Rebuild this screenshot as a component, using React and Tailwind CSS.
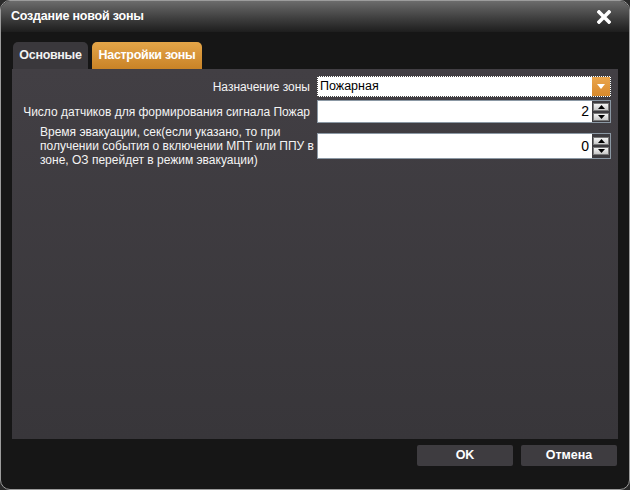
import React, { useState } from 'react';

function Spinner() {
    return (
        <div className="flex flex-col justify-center gap-[2px] w-[17px] pr-[1px]">
            <button className="h-[8px] bg-gradient-to-b from-[#f4f4f4] to-[#c8c8c8] border border-[#7a7a7a] flex items-center justify-center">
                <svg width="7" height="4" viewBox="0 0 7 4"><path d="M0 4 L3.5 0 L7 4 Z" fill="#000" /></svg>
            </button>
            <button className="h-[8px] bg-gradient-to-b from-[#f4f4f4] to-[#c8c8c8] border border-[#7a7a7a] flex items-center justify-center">
                <svg width="7" height="4" viewBox="0 0 7 4"><path d="M0 0 L3.5 4 L7 0 Z" fill="#000" /></svg>
            </button>
        </div>
    );
}

function NumberField({ value, height }) {
    return (
        <div className={`flex items-stretch bg-[#3d3b3f] border border-[#8b98a4] ${height}`}>
            <div className="flex-1 bg-white flex items-center justify-end pr-[3px] text-[14px] text-black">{value}</div>
            <div className="w-[1px]" />
            <Spinner />
        </div>
    );
}

export default function App() {
    const [tab, setTab] = useState(1);

    return (
        <div className="w-[630px] h-[490px] bg-[#2a2a2a] font-['Liberation_Sans',Arial,sans-serif]">
            <div className="w-full h-full rounded-[10px] border border-[#9c9c9c] bg-[#161616] overflow-hidden flex flex-col">
                {/* Title bar */}
                <div className="h-[31px] shrink-0 bg-gradient-to-b from-[#6c6c6c] to-[#1e1e1e] flex items-center justify-between pl-[10px] pr-[18px]">
                    <span className="text-white font-bold text-[12.5px] tracking-[-0.2px]">Создание новой зоны</span>
                    <svg width="14" height="14" viewBox="0 0 14 14">
                        <path d="M2 2 L12 12 M12 2 L2 12" stroke="#fff" strokeWidth="3.6" strokeLinecap="square" />
                    </svg>
                </div>

                {/* Tabs */}
                <div className="flex gap-[4px] pl-[12px] pt-[10px] h-[37px] shrink-0 items-end">
                    <button
                        onClick={() => setTab(0)}
                        className={`h-[27px] w-[75px] whitespace-nowrap rounded-t-[5px] text-[12.5px] font-bold tracking-[-0.3px] ${tab === 0 ? 'bg-gradient-to-b from-[#e4a548] to-[#c98326] text-white' : 'bg-[#3a383c] text-[#f2f2f2]'}`}
                    >
                        Основные
                    </button>
                    <button
                        onClick={() => setTab(1)}
                        className={`h-[27px] w-[110px] whitespace-nowrap rounded-t-[5px] text-[12.5px] font-bold tracking-[-0.3px] ${tab === 1 ? 'bg-gradient-to-b from-[#e4a548] to-[#c98326] text-white' : 'bg-[#3a383c] text-[#f2f2f2]'}`}
                    >
                        Настройки зоны
                    </button>
                </div>

                {/* Panel */}
                <div className="mx-[11px] h-[370px] bg-gradient-to-b from-[#423f44] to-[#38363a] pt-[7px] pl-[10px] pr-[6px] text-[12px] text-[#f4f4f4]">
                    <div className="grid grid-cols-[290px_294px] gap-x-[5px] items-center">
                        <div className="text-right pr-[2px] whitespace-nowrap">Назначение зоны</div>
                        <div className="h-[21px] bg-white border border-dotted border-[#444] flex items-stretch">
                            <div className="flex-1 flex items-center pl-[2px] text-[12.5px] text-black">Пожарная</div>
                            <div className="w-[18px] bg-gradient-to-b from-[#eaa54c] to-[#d98a2c] flex items-center justify-center">
                                <svg width="8" height="5" viewBox="0 0 8 5"><path d="M0 0 L4 5 L8 0 Z" fill="#fff" /></svg>
                            </div>
                        </div>

                        <div className="text-right pr-[2px] mt-[3px] whitespace-nowrap">Число датчиков для формирования сигнала Пожар</div>
                        <div className="mt-[3px]">
                            <NumberField value="2" height="h-[23px]" />
                        </div>

                        <div className="flex justify-end mr-[-4px]">
                            <div className="w-[276px] leading-[14px] text-left py-[2px] text-[12px]">
                                Время эвакуации, сек(если указано, то при получении события о включении МПТ или ППУ в зоне, ОЗ перейдет в режим эвакуации)
                            </div>
                        </div>
                        <div>
                            <NumberField value="0" height="h-[26px]" />
                        </div>
                    </div>
                </div>

                {/* Footer */}
                <div className="flex justify-end gap-[8px] pr-[12px] pt-[6px]">
                    <button className="w-[96px] h-[21px] rounded-[2px] bg-[#3e3c40] text-white text-[12.5px] font-bold">OK</button>
                    <button className="w-[96px] h-[21px] rounded-[2px] bg-[#3e3c40] text-white text-[12.5px] font-bold">Отмена</button>
                </div>
            </div>
        </div>
    );
}
